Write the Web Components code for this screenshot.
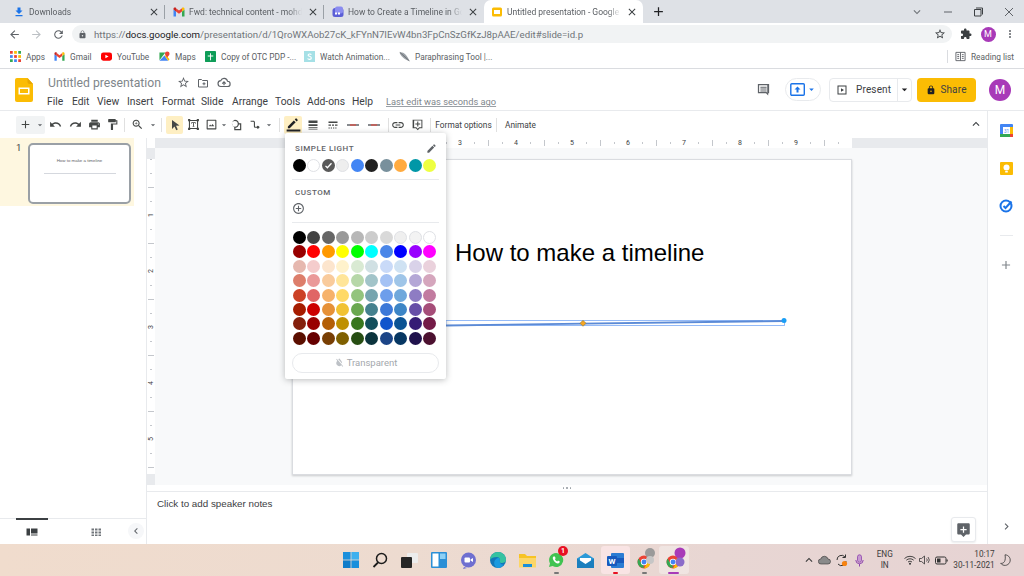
<!DOCTYPE html>
<html lang="en"><head><meta charset="utf-8"><title>Untitled presentation</title>
<style>
html,body{margin:0;padding:0;background:#fff}
body{width:1024px;height:576px;overflow:hidden;font-family:Roboto,"Liberation Sans",sans-serif}
</style></head>
<body>
<app-shell></app-shell>
<script>
const P={
star:'M22 9.24l-7.19-.62L12 2 9.19 8.63 2 9.24l5.46 4.73L5.82 21 12 17.27 18.18 21l-1.63-7.03L22 9.24zM12 15.4l-3.76 2.27 1-4.28-3.32-2.88 4.38-.38L12 6.1l1.71 4.04 4.38.38-3.32 2.88 1 4.28L12 15.4z',
back:'M20 11H7.83l5.59-5.59L12 4l-8 8 8 8 1.41-1.41L7.83 13H20v-2z',
forward:'M12 4l-1.41 1.41L16.17 11H4v2h12.17l-5.58 5.59L12 20l8-8z',
reload:'M17.65 6.35C16.2 4.9 14.21 4 12 4c-4.42 0-7.99 3.58-7.99 8s3.57 8 7.99 8c3.73 0 6.84-2.55 7.73-6h-2.08c-.82 2.33-3.04 4-5.65 4-3.31 0-6-2.69-6-6s2.69-6 6-6c1.66 0 3.14.69 4.22 1.78L13 11h7V4l-2.35 2.35z',
lock:'M18 8h-1V6c0-2.76-2.24-5-5-5S7 3.24 7 6v2H6c-1.1 0-2 .9-2 2v10c0 1.1.9 2 2 2h12c1.1 0 2-.9 2-2V10c0-1.1-.9-2-2-2zm-6 9c-1.1 0-2-.9-2-2s.9-2 2-2 2 .9 2 2-.9 2-2 2zm3.1-9H8.9V6c0-1.71 1.39-3.1 3.1-3.1 1.71 0 3.1 1.39 3.1 3.1v2z',
puzzle:'M20.5 11H19V7c0-1.1-.9-2-2-2h-4V3.5C13 2.12 11.88 1 10.5 1S8 2.12 8 3.5V5H4c-1.1 0-1.99.9-1.99 2v3.8H3.5c1.49 0 2.7 1.21 2.7 2.7s-1.21 2.7-2.7 2.7H2V20c0 1.1.9 2 2 2h3.8v-1.5c0-1.49 1.21-2.7 2.7-2.7 1.49 0 2.7 1.21 2.7 2.7V22H17c1.1 0 2-.9 2-2v-4h1.5c1.38 0 2.5-1.12 2.5-2.5S21.88 11 20.5 11z',
undo:'M12.5 8c-2.65 0-5.05.99-6.9 2.6L2 7v9h9l-3.62-3.62c1.39-1.16 3.16-1.88 5.12-1.88 3.54 0 6.55 2.31 7.6 5.5l2.37-.78C21.08 11.03 17.15 8 12.5 8z',
redo:'M18.4 10.6C16.55 8.99 14.15 8 11.5 8c-4.65 0-8.58 3.03-9.96 7.22L3.9 16c1.05-3.19 4.05-5.5 7.6-5.5 1.95 0 3.73.72 5.12 1.88L13 16h9V7l-3.6 3.6z',
print:'M19 8H5c-1.66 0-3 1.34-3 3v6h4v4h12v-4h4v-6c0-1.66-1.34-3-3-3zm-3 11H8v-5h8v5zm3-7c-.55 0-1-.45-1-1s.45-1 1-1 1 .45 1 1-.45 1-1 1zm-1-9H6v4h12V3z',
paint:'M18 4V3c0-.55-.45-1-1-1H5c-.55 0-1 .45-1 1v4c0 .55.45 1 1 1h12c.55 0 1-.45 1-1V6h1v4H9v11c0 .55.45 1 1 1h2c.55 0 1-.45 1-1v-9h8V4h-3z',
zoom:'M15.5 14h-.79l-.28-.27C15.41 12.59 16 11.11 16 9.5 16 5.91 13.09 3 9.5 3S3 5.91 3 9.5 5.91 16 9.5 16c1.61 0 3.09-.59 4.23-1.57l.27.28v.79l5 4.99L20.49 19l-4.99-5zm-6 0C7.01 14 5 11.99 5 9.5S7.01 5 9.5 5 14 7.01 14 9.5 11.99 14 9.5 14zm.5-7H9v2H7v1h2v2h1v-2h2V9h-2z',
pencil:'M3 17.25V21h3.75L17.81 9.94l-3.75-3.75L3 17.25zM20.71 7.04c.39-.39.39-1.02 0-1.41l-2.34-2.34c-.39-.39-1.02-.39-1.41 0l-1.83 1.83 3.75 3.75 1.83-1.83z',
penbar:'M3 15v3h3L15.5 8.5l-3-3L3 15zM18.6 5.4c.3-.3.3-.8 0-1.1l-1.9-1.9c-.3-.3-.8-.3-1.1 0l-1.6 1.6 3 3 1.6-1.6zM1 20h22v3H1z',
link:'M3.9 12c0-1.71 1.39-3.1 3.1-3.1h4V7H7c-2.76 0-5 2.24-5 5s2.24 5 5 5h4v-1.9H7c-1.71 0-3.1-1.39-3.1-3.1zM8 13h8v-2H8v2zm9-6h-4v1.9h4c1.71 0 3.1 1.39 3.1 3.1s-1.39 3.1-3.1 3.1h-4V17h4c2.76 0 5-2.24 5-5s-2.24-5-5-5z',
up:'M12 8l-6 6 1.41 1.41L12 10.83l4.59 4.58L18 14z',
left:'M15.41 7.41L14 6l-6 6 6 6 1.41-1.41L10.83 12z',
right:'M10 6L8.59 7.41 13.17 12l-4.58 4.59L10 18l6-6z',
add:'M19 13h-6v6h-2v-6H5v-2h6V5h2v6h6v2z',
close:'M19 6.41L17.59 5 12 10.59 6.41 5 5 6.41 10.59 12 5 17.59 6.41 19 12 13.41 17.59 19 19 17.59 13.41 12z',
caret:'M7 10l5 5 5-5z',
cursor:'M6 2l0 18 5-5 3.5 7.5 3-1.4L14 13.6l7-.6z',
comment:'M3 3h18v15h-1.5v3.5L16 18H3zM5 5v11h12l1 1V5zM7 7.5h10v1.6H7zM7 10.5h10v1.6H7zM7 13.5h10v1.6H7z',
commentadd:'M4 3h17v16h-4l-1 0-3.5 3.5L9 19H3V3zm1.8 1.8v12.4h4l2.7 2.6 2.7-2.6h4V4.8zM11.5 6.5h2V10h3.5v2h-3.5v3.5h-2V12H8v-2h3.5z',
addcomment:'M4 2h16c1.1 0 2 .9 2 2v14c0 1.1-.9 2-2 2h-4l-4 4-4-4H4c-1.1 0-2-.9-2-2V4c0-1.1.9-2 2-2zm7 5v4H7v2h4v4h2v-4h4v-2h-4V7z',
filmview:'M1 5h7v14H1zM10 5h13v10H10zM10 17h13v2H10z',
grid:'M3 5h5v4H3zM10 5h5v4h-5zM17 5h5v4h-5zM3 11h5v4H3zM10 11h5v4h-5zM17 11h5v4h-5zM3 17h5v3H3zM10 17h5v3h-5zM17 17h5v3h-5z',
present:'M3 3h18v18H3zM5 5v14h14V5zM10 8.5l6 3.5-6 3.5z',
dots:'M12 8a2 2 0 1 0 0-4 2 2 0 0 0 0 4zm0 2a2 2 0 1 0 0 4 2 2 0 0 0 0-4zm0 6a2 2 0 1 0 0 4 2 2 0 0 0 0-4z',
weight:'M3 3h18v5H3zM3 10.5h18v3.5H3zM3 16.5h18v2H3zM3 20.5h18v1H3z',
dash:'M3 5h18v3H3zM3 11h5v2.5H3zM10 11h4v2.5h-4zM16 11h5v2.5h-5zM3 17h2.5v2H3zM7.5 17H10v2H7.5zM12 17h2.5v2H12zM16.5 17H19v2h-2.5z',
image:'M4 3h16c.6 0 1 .4 1 1v16c0 .6-.4 1-1 1H4c-.6 0-1-.4-1-1V4c0-.6.4-1 1-1zm1 2v14h14V5zM7 15l2.5-3 2 2.4 2.5-3.4 3 4z',
shape:'M10 3a7 7 0 0 1 6.93 6H21v12H9v-5.07A7 7 0 0 1 10 3zm0 2a5 5 0 1 0 0 10 5 5 0 0 0 0-10zm6.9 6a7 7 0 0 1-5.9 5.9V19h8v-8z',
connector:'M3 5h5c1.7 0 3 1.3 3 3v7c0 .6.4 1 1 1h2.3a2.5 2.5 0 1 1 0 2H12c-1.7 0-3-1.3-3-3V8c0-.6-.4-1-1-1H3z',
textbox:'M2 2h4v1.5h12V2h4v4h-1.5v12H22v4h-4v-1.5H6V22H2v-4h1.5V6H2zm3.5 4v12H6v.5h12V18h.5V6H18v-.5H6V6zM8 8h8v2.5h-1.2V9.3h-2V15h1v1h-3.6v-1h1V9.3h-2v1.2H8z',
plusc:'M13 7h-2v4H7v2h4v4h2v-4h4v-2h-4V7zm-1-5C6.48 2 2 6.48 2 12s4.48 10 10 10 10-4.48 10-10S17.52 2 12 2zm0 18c-4.41 0-8-3.59-8-8s3.59-8 8-8 8 3.59 8 8-3.59 8-8 8z',
transparent:'M6 4l14 16-1.2 1L16 18a7 7 0 0 1-10-1c-2-3-1-6 1-9L4.800 5zM12 3c2 2.500 5 6 5.500 9 .1.700.1 1.400 0 2L9.300 5c1-1 1.900-1.500 2.700-2z'
};
const chromeIcon=`<svg viewBox="0 0 24 24" width="100%" height="100%"><circle cx="12" cy="12" r="11" fill="#ea4335"/><path fill="#34a853" d="M2.500 6.500 8 16l4 1-4.500 5A11 11 0 0 1 2.500 6.500z"/><path fill="#34a853" d="M2.500 6.500 8 15l5 7a11 11 0 0 1-10.500-15.500z"/><path fill="#fbbc04" d="M21.500 6.500A11 11 0 0 1 12 23l4.500-8 1-8.500z"/><circle cx="12" cy="12" r="5.500" fill="#fff"/><circle cx="12" cy="12" r="4.200" fill="#4285f4"/></svg>`;
const gmailIcon=`<svg viewBox="0 0 24 24" width="100%" height="100%"><path fill="#4285f4" d="M1 21h5V11L1 7z"/><path fill="#34a853" d="M18 21h5V7l-5 4z"/><path fill="#ea4335" d="M6 11l6 4.500 6-4.500V4.500l-6 4.500L6 4.500z"/><path fill="#c5221f" d="M1 7V5.500C1 3 4 2 6 3.500V11z"/><path fill="#fbbc04" d="M18 11V3.500C20 2 23 3 23 5.500V7z"/></svg>`;

function def(tag,css,render){
  customElements.define(tag,class extends HTMLElement{
    connectedCallback(){
      if(this.shadowRoot)return;
      const s=this.attachShadow({mode:'open'});
      const body=typeof render==='function'?render(this):render;
      s.innerHTML=`<style>${css}</style>${body}`;
    }
  });
}
def('g-icon',':host{display:inline-flex;align-items:center;justify-content:center;flex:none}svg{display:block;width:100%;height:100%}',el=>{
  const n=el.getAttribute('n'),c=el.getAttribute('c')||'#5f6368',z=el.getAttribute('z')||14;
  el.style.width=z+'px';el.style.height=z+'px';
  return `<svg viewBox="0 0 24 24"><path fill="${c}" fill-rule="evenodd" d="${P[n]}"/></svg>`;
});

/* browser tabs */
def('chrome-tab',`
:host{display:flex;align-items:center;height:23px;box-sizing:border-box;position:relative;color:#5a5e63;font:8.500px Roboto,"Liberation Sans",sans-serif;flex:none}
:host([active]){background:#fff;border-radius:7px 7px 0 0;color:#5a5e63}
.ic{width:12px;height:12px;flex:none;display:flex;margin-right:4px}
.t{flex:1;white-space:nowrap;overflow:hidden;-webkit-mask-image:linear-gradient(90deg,#000 88%,transparent);mask-image:linear-gradient(90deg,#000 88%,transparent)}
.x{width:22px;display:flex;justify-content:center;flex:none}
`,el=>`<span class="ic"><slot name="icon"></slot></span><span class="t"><slot></slot></span><span class="x"><g-icon n="close" c="#3c4043" z="12"></g-icon></span>`);
def('tab-sep',':host{display:block;width:1px;height:14px;background:#9aa0a6;flex:none;margin-left:-1px}','');
def('chrome-tabs',`
:host{display:flex;align-items:center;height:23px;background:#dee1e6;flex:none}
.win{display:flex;margin-left:auto;align-items:center}
.win g-icon{width:12px}
.w{width:30.500px;display:flex;justify-content:center}
.plus{margin-left:3px;width:24px;display:flex;justify-content:center}
`,`
<chrome-tab style="width:165px;padding-left:13px"><svg slot="icon" viewBox="0 0 24 24" width="12" height="12"><path fill="#1a73e8" d="M19 9h-4V3H9v6H5l7 7zM5 18v2.500h14V18z"/></svg>Downloads</chrome-tab><tab-sep></tab-sep>
<chrome-tab style="width:159px;padding-left:8px"><svg slot="icon" viewBox="0 0 24 24" width="12" height="12">${gmailIcon.replace(/^<svg[^>]*>|<\/svg>$/g,'')}</svg>Fwd: technical content - mohd.ashraf@</chrome-tab><tab-sep></tab-sep>
<chrome-tab style="width:160px;padding-left:8px"><svg slot="icon" viewBox="0 0 24 24" width="12" height="12"><rect x="1" y="4" width="22" height="18" rx="5" fill="#5b5fd6"/><rect x="6" y="1" width="16" height="14" rx="4" fill="#8a8cf0"/><rect x="6" y="13" width="4" height="4" fill="#fff"/><rect x="12" y="13" width="4" height="4" fill="#fff"/></svg>How to Create a Timeline in Google Slides</chrome-tab>
<chrome-tab active style="width:159px;padding-left:7px"><svg slot="icon" viewBox="0 0 24 24" width="12" height="12"><rect x="2" y="3" width="20" height="18" rx="3" fill="#fbbc04"/><rect x="6" y="8" width="12" height="8" fill="#fff"/></svg>Untitled presentation - Google Slides</chrome-tab>
<span class="plus"><g-icon n="add" c="#202124" z="15"></g-icon></span>
<span class="win">
<span class="w"><g-icon n="up" c="#70757a" z="14" style="transform:rotate(180deg)"></g-icon></span>
<span class="w"><svg width="10" height="10" viewBox="0 0 10 10"><path d="M1 5h8" stroke="#5f6368"/></svg></span>
<span class="w"><svg width="10" height="10" viewBox="0 0 10 10"><path d="M1.500 2.500h6.500v6.500h-6.500zM3 1h6.500v6.500" fill="none" stroke="#3c4043"/></svg></span>
<span class="w"><svg width="10" height="10" viewBox="0 0 10 10"><path d="M1 1l8 8M9 1l-8 8" stroke="#5f6368"/></svg></span>
</span>`);

/* omnibox row */
def('chrome-omnibox',`
:host{display:flex;align-items:center;height:22px;background:#fff;flex:none;position:relative}
.nav{display:flex;width:72px;padding-left:3px;box-sizing:border-box}
.nav span{width:22px;display:flex;justify-content:center}
.bar{width:880px;height:18px;border-radius:9px;background:#f1f3f4;display:flex;align-items:center;box-sizing:border-box;padding:0 6px 0 6px;font:9.700px Roboto,"Liberation Sans",sans-serif;color:#70757a}
.u{margin-left:7px;flex:1;white-space:nowrap}
.u b{font-weight:400;color:#202124}
.r{display:flex;align-items:center;flex:1;}
.r span{display:flex;justify-content:center}
.av{width:15px;height:15px;border-radius:50%;background:#a83ab8;color:#fff;font:9px Roboto,sans-serif;display:flex;align-items:center;justify-content:center}
`,`
<span class="nav"><span><g-icon n="back" c="#5f6368" z="13"></g-icon></span><span><g-icon n="forward" c="#bcc0c4" z="13"></g-icon></span><span><g-icon n="reload" c="#5f6368" z="13"></g-icon></span></span>
<span class="bar"><g-icon n="lock" c="#5f6368" z="9"></g-icon><span class="u">https://<b>docs.google.com</b>/presentation/d/1QroWXAob27cK_kFYnN7IEvW4bn3FpCnSzGfKzJ8pAAE/edit#slide=id.p</span><g-icon n="star" c="#3c4043" z="12"></g-icon></span>
<span class="r"><span style="width:28px"><g-icon n="puzzle" c="#3c4043" z="12"></g-icon></span><span style="width:16px"><span class="av">M</span></span><span style="width:28px"><g-icon n="dots" c="#5f6368" z="12"></g-icon></span></span>`);

/* bookmarks */
def('book-mark',`
:host{display:flex;align-items:center;flex:none;color:#5a5e63;font:8.300px Roboto,"Liberation Sans",sans-serif;white-space:nowrap}
.i{width:11px;height:11px;margin-right:5px;display:flex;flex:none}
`,`<span class="i"><slot name="i"></slot></span><slot></slot>`);
def('chrome-bookmarks',`
:host{display:flex;align-items:center;height:24px;box-sizing:border-box;border-bottom:1px solid #dadce0;background:#fff;padding-left:10px;flex:none}
.rl{margin-left:auto;display:flex;align-items:center;padding-right:10px;color:#5a5e63;font:8.300px Roboto,"Liberation Sans",sans-serif}
.d{width:1px;height:13px;background:#dadce0;margin-right:7px}
svg{display:block}
`,`
<book-mark style="width:44px"><svg slot="i" viewBox="0 0 12 12" width="11" height="11"><g id="a"><rect width="3" height="3" fill="#ea4335"/><rect x="4.500" width="3" height="3" fill="#fbbc04"/><rect x="9" width="3" height="3" fill="#34a853"/><rect y="4.500" width="3" height="3" fill="#4285f4"/><rect x="4.500" y="4.500" width="3" height="3" fill="#ea4335"/><rect x="9" y="4.500" width="3" height="3" fill="#fbbc04"/><rect y="9" width="3" height="3" fill="#34a853"/><rect x="4.500" y="9" width="3" height="3" fill="#4285f4"/><rect x="9" y="9" width="3" height="3" fill="#ea4335"/></g></svg>Apps</book-mark>
<book-mark style="width:47px"><svg slot="i" viewBox="0 0 24 24" width="11" height="11">${gmailIcon.replace(/^<svg[^>]*>|<\/svg>$/g,'')}</svg>Gmail</book-mark>
<book-mark style="width:58px"><svg slot="i" viewBox="0 0 24 24" width="11" height="11"><rect y="3" width="24" height="18" rx="5" fill="#f00"/><path d="M9.500 8v8l7-4z" fill="#fff"/></svg>YouTube</book-mark>
<book-mark style="width:46px"><svg slot="i" viewBox="0 0 24 24" width="11" height="11"><path fill="#34a853" d="M1 3h13L1 20z"/><path fill="#4285f4" d="M1 21l11-11 8 11z"/><path fill="#fbbc04" d="M12 10l8 11 3-3-7-8z"/><path fill="#ea4335" d="M18 1a5 5 0 0 1 5 5c0 3-5 8-5 8s-5-5-5-8a5 5 0 0 1 5-5z"/></svg>Maps</book-mark>
<book-mark style="width:99px"><svg slot="i" viewBox="0 0 24 24" width="11" height="11"><rect width="24" height="24" rx="1" fill="#0f9d58"/><path d="M11 5h2v5h5v2h-5v8h-2v-8H6v-2h5z" fill="#fff"/></svg>Copy of OTC PDP -...</book-mark>
<book-mark style="width:95px"><svg slot="i" viewBox="0 0 24 24" width="11" height="11"><rect width="24" height="24" fill="#a5e0e6"/><path d="M16 8c-1-2-7-2-7 1s7 2 7 6-7 4-8 1" fill="none" stroke="#fff" stroke-width="2.500"/></svg>Watch Animation...</book-mark>
<book-mark><svg slot="i" viewBox="0 0 24 24" width="11" height="11"><path d="M1 3c8-2 16 5 22 19C15 19 5 14 1 3z" fill="#9aa0a6"/><path d="M2 3l21 19" stroke="#3c4043"/></svg>Paraphrasing Tool |...</book-mark>
<span class="rl"><span class="d"></span><svg width="11" height="11" viewBox="0 0 12 12" style="margin-right:5px"><path d="M1 1.500h10v9H1zM6 1.500v9M2.500 4h2M2.500 6h2M2.500 8h2M7.500 4h2M7.500 6h2M7.500 8h2" fill="none" stroke="#5f6368"/></svg>Reading list</span>`);

/* docs header */
def('docs-header',`
:host{display:flex;height:42px;box-sizing:border-box;border-bottom:1px solid #e8eaed;background:#fff;flex:none;position:relative}
.logo{width:48px;padding:9px 0 0 15px;box-sizing:border-box;flex:none}
.mid{display:flex;flex-direction:column;flex:none;width:700px;padding-top:6px;box-sizing:border-box}
.title{display:flex;align-items:center;height:16px;color:#80868b;font:12.200px Roboto,"Liberation Sans",sans-serif}
.title .n{width:129px;white-space:nowrap}
.title g-icon{margin-right:7px}
.menu{display:flex;margin-top:3px;height:18px;align-items:center;margin-left:-1px;color:#3c4043;font:10.300px Roboto,"Liberation Sans",sans-serif;white-space:nowrap}
.menu span{flex:none}
.menu u{color:#80868b;text-decoration-color:#9aa0a6;font-size:9.300px}
.right{display:flex;align-items:center;margin-left:auto;padding-right:13px}
.cm{margin-right:1px}
.pill{width:36px;height:23px;box-sizing:border-box;border:1px solid #e8eaed;border-radius:12px;display:flex;align-items:center;justify-content:center;margin-left:13px;margin-right:8px}
.pre{display:flex;height:24px;width:83px;box-sizing:border-box;border:1px solid #e8eaed;border-radius:4px;margin-right:5px;color:#3c4043;font:400 10px Roboto,sans-serif;letter-spacing:.15px;align-items:center}
.pre .a{display:flex;align-items:center;width:69px;border-right:1px solid #e8eaed;height:100%;box-sizing:border-box;padding-left:6px}
.share{display:flex;align-items:center;justify-content:center;width:59px;height:24px;background:#fbbc04;border-radius:4px;font:400 10px Roboto,sans-serif;letter-spacing:.15px;color:#3c4043}
.av{width:22px;height:22px;border-radius:50%;background:#a83ab8;color:#fff;margin-left:13px;display:flex;align-items:center;justify-content:center;font:12px Roboto,sans-serif}
`,`
<div class="logo"><svg width="18" height="24" viewBox="0 0 18 24"><path fill="#fbbc04" d="M2 0h10.500L18 6v16a2 2 0 0 1-2 2H2a2 2 0 0 1-2-2V2a2 2 0 0 1 2-2z"/><path fill="#e8a600" d="M12.500 0v4a2 2 0 0 0 2 2H18z"/><path fill="#fff" fill-rule="evenodd" d="M3.500 9.500h11v7h-11zM5 11v4h8v-4z"/></svg></div>
<div class="mid">
<div class="title"><span class="n">Untitled presentation</span><g-icon n="star" z="13"></g-icon><svg width="12" height="12" viewBox="0 0 24 24" style="margin:0 8px 0 0"><path d="M3 5h6l2 2h10v13H3z M11 13.500h6M14 10.500v6" fill="none" stroke="#5f6368" stroke-width="2"/></svg><svg width="14" height="14" viewBox="0 0 24 24"><path d="M7 18a5 5 0 0 1-.5-10A6 6 0 0 1 18 9a4.500 4.500 0 0 1 0 9zM9 13l3-3 3 3M12 10v6" fill="none" stroke="#5f6368" stroke-width="2"/></svg></div>
<div class="menu"><span style="width:25px">File</span><span style="width:25px">Edit</span><span style="width:30px">View</span><span style="width:35px">Insert</span><span style="width:39px">Format</span><span style="width:31px">Slide</span><span style="width:43px">Arrange</span><span style="width:32px">Tools</span><span style="width:45px">Add-ons</span><span style="width:34px">Help</span><span><u>Last edit was seconds ago</u></span></div>
</div>
<div class="right">
<g-icon n="comment" z="15" class="cm"></g-icon>
<span class="pill"><svg width="16" height="13" viewBox="0 0 16 13"><rect x=".8" y=".8" width="13.500" height="11.500" rx="1" fill="none" stroke="#1a73e8" stroke-width="1.400"/><path d="M7.500 3.500l3 3H8.500v3h-2v-3h-2z" fill="#1a73e8"/></svg><g-icon n="caret" c="#1a73e8" z="11"></g-icon></span>
<span class="pre"><span class="a"><g-icon n="present" c="#3c4043" z="12"></g-icon><span style="margin-left:8px">Present</span></span><g-icon n="caret" c="#202124" z="13"></g-icon></span>
<span class="share"><g-icon n="lock" c="#202124" z="10"></g-icon><span style="margin-left:4px">Share</span></span>
<span class="av">M</span>
</div>`);

/* toolbar */
def('tb-item',`
:host{display:flex;align-items:center;justify-content:center;height:18px;flex:none}
:host([on]){background:#feefc3;border-radius:2px}
:host([sep]){width:1px!important;height:14px;background:#e0e0e0;}
`,'<slot></slot>');
def('docs-toolbar',`
:host{display:flex;align-items:center;height:27px;box-sizing:border-box;background:#fff;padding-left:16px;flex:none;color:#3c4043;font:400 8.300px Roboto,sans-serif}
.g{display:flex;background:#f1f3f4;border-radius:2px;height:18px;margin-right:0}
.end{margin-left:auto;padding-right:41px}
`,()=>{
 const I=(n,w,z=13,extra='')=>`<tb-item style="width:${w}px" ${extra}><g-icon n="${n}" z="${z}" c="#444746"></g-icon></tb-item>`;
 const C=(w)=>`<tb-item style="width:${w}px"><g-icon n="caret" z="10" c="#5f6368"></g-icon></tb-item>`;
 const S=(l,r)=>`<tb-item sep style="margin:0 ${r}px 0 ${l}px"></tb-item>`;
 const L=(w,c)=>`<tb-item style="width:${w}px"><svg width="12" height="4" viewBox="0 0 12 4"><path d="M0 2h12" stroke="#5f6368" stroke-width="1.500"/><path d="M3 2h6" stroke="#ea4335" stroke-width="1.500" opacity=".7"/></svg></tb-item>`;
 return `<span class="g">${I('add',19,13)}${C(10)}</span>
 ${I('undo',20)}${I('redo',20)}${I('print',19)}${I('paint',17)}${S(3,0)}
 ${I('zoom',25)}${C(6)}${S(5,4)}
 ${I('cursor',17,12,'on')}${I('textbox',20)}${I('image',17)}${C(7)}${I('shape',18,14)}${I('connector',20)}${C(8)}${S(6,4)}
 <tb-item on style="width:18px"><g-icon n="penbar" z="15" c="#202124"></g-icon></tb-item>${I('weight',21,12)}${I('dash',20,12)}${L(20)}${L(21)}${S(4,2)}
 ${I('link',14,14)}${`<tb-item style="width:24px"><g-icon n="commentadd" z="13" c="#444746"></g-icon></tb-item>`}${S(1,5)}
 <tb-item style="width:55px;white-space:nowrap;">Format options</tb-item>${S(5,8)}<tb-item style="white-space:nowrap">Animate</tb-item>
 <span class="end"><g-icon n="up" z="14" c="#3c4043" style="transform:none"></g-icon></span>`;
});

/* filmstrip */
def('film-strip',`
:host{display:flex;flex-direction:column;width:147px;box-sizing:border-box;border-right:1px solid #e8eaed;background:#fff;flex:none;position:relative}
.row{display:flex;width:134px;height:68px;background:#fef7e0;box-sizing:border-box;padding:5px 0 0 28px;margin-top:0;position:relative}
.n{position:absolute;left:16px;top:4px;font:9.500px Roboto,sans-serif;color:#3c4043}
.th{width:103px;height:61px;background:#fff;border:2px solid #9aa0a6;border-radius:5px;box-sizing:border-box;display:flex;flex-direction:column;align-items:center;font:4.400px "Liberation Sans",sans-serif;color:#5f6368;padding-top:13px}
.th i{display:block;width:72px;height:1px;background:#d5d8de;margin-top:10px}
.sp{flex:1}
.bot{height:26px;border-top:1px solid #e8eaed;display:flex;align-items:center;position:relative;box-sizing:border-box}
.bar{position:absolute;top:-1px;left:16px;width:32px;height:2px;background:#3c4043}
.c{width:16px;height:16px;border-radius:50%;background:#f6f7f9;display:flex;align-items:center;justify-content:center;position:absolute;left:128px;top:4px}
.a{width:64px;display:flex;justify-content:center}
`,`<div class="row"><span class="n">1</span><div class="th"><span>How to make a timeline</span><i></i></div></div><div class="sp"></div>
<div class="bot"><span class="bar"></span><span class="a"><g-icon n="filmview" z="12" c="#3c4043"></g-icon></span><span class="a"><g-icon n="grid" z="12" c="#70757a"></g-icon></span><span class="c"><g-icon n="left" z="12" c="#5f6368"></g-icon></span></div>`);

/* rulers */
def('h-ruler',`
:host{display:flex;height:10px;background:#e8eaed;flex:none;box-sizing:border-box}
.corner{width:8px;background:#fff;flex:none}
.gap{width:137px;flex:none}
.w{width:560px;flex:none;background-color:#fff;display:flex;font:7px Roboto,sans-serif;color:#3c4043;
background-image:repeating-linear-gradient(90deg,#c4c7cc 0 1px,transparent 1px 14px),repeating-linear-gradient(90deg,transparent 0 28px,#c4c7cc 28px 29px,transparent 29px 56px);
background-size:100% 2px,100% 6px;background-position:0 50%;background-repeat:no-repeat}
.w span{width:56px;text-align:center;background:transparent;line-height:10px}
.w span b{font-weight:400;background:#fff;padding:0 1px}
.h{width:28px;flex:none}
`,`<div class="corner"></div><div class="gap"></div><div class="w"><i class="h"></i>${[1,2,3,4,5,6,7,8,9].map(n=>n<3?'<span></span>':`<span><b>${n}</b></span>`).join('')}</div>`);
def('v-ruler',`
:host{display:flex;flex-direction:column;width:8px;background:#e8eaed;flex:none}
.t{height:11px;flex:none}
.w{height:315px;flex:none;background-color:#fff;display:flex;flex-direction:column;font:7px Roboto,sans-serif;color:#3c4043;
background-image:repeating-linear-gradient(180deg,#c4c7cc 0 1px,transparent 1px 14px),repeating-linear-gradient(180deg,transparent 0 28px,#c4c7cc 28px 29px,transparent 29px 56px);
background-size:2px 100%,6px 100%;background-position:50% 0;background-repeat:no-repeat}
.w span{height:56px;display:flex;align-items:center;justify-content:center}
.w span b{font-weight:400;background:#fff;transform:rotate(-90deg);display:block}
.h{height:28px;flex:none}
`,`<div class="t"></div><div class="w"><i class="h"></i>${[1,2,3,4,5].map(n=>`<span><b>${n}</b></span>`).join('')}</div>`);

/* slide */
def('slide-page',`
:host{display:block;width:560px;height:316px;box-sizing:border-box;background:#fff;border:1px solid #dadce0;box-shadow:0 1px 2px rgba(60,64,67,.25);position:relative;padding:79px 0 0 162px;font:24px "Liberation Sans",Arial,sans-serif;color:#000;white-space:nowrap;margin:11px 0 0 137px}
svg{position:absolute;left:0;top:0;overflow:visible}
`,`How to make a timeline
<svg width="558" height="314" viewBox="0 0 558 314">
<rect x="153" y="160.500" width="338.500" height="5" fill="none" stroke="#8ab4f8" stroke-width=".9"/>
<path d="M153 165.500L491 161" stroke="#5b8ad6" stroke-width="1.800"/>
<path d="M287 163.300l3-3 3 3-3 3z" fill="#f5a623" stroke="#7a6a30" stroke-width=".5"/>
<circle cx="491" cy="160.500" r="2.500" fill="#1a9ef5"/>
</svg>`);

def('docs-canvas',`
:host{display:flex;flex-direction:column;flex:1;min-width:0;background:#fff}
.r{display:flex;height:337px;flex:none}
.c{flex:1;background:#f8f9fa;overflow:hidden;min-width:0}
.grip{height:6px;border-bottom:1px solid #e8eaed;display:flex;justify-content:center;align-items:center;gap:2px;flex:none;box-sizing:content-box}
.grip i{width:1.500px;height:1.500px;background:#9aa0a6;border-radius:50%}
.notes{flex:1;padding:6px 10px;font:9.800px "Liberation Sans",Arial,sans-serif;color:#3c4043;position:relative;box-sizing:border-box}
.nb{position:absolute;right:11px;top:25px;width:25px;height:25px;box-sizing:border-box;border:1px solid #e8eaed;border-radius:3px;background:#fff;display:flex;align-items:center;justify-content:center;box-shadow:0 1px 2px rgba(0,0,0,.08)}
`,`<h-ruler></h-ruler><div class="r"><v-ruler></v-ruler><div class="c"><slide-page></slide-page></div></div>
<div class="grip"><i></i><i></i><i></i></div>
<div class="notes">Click to add speaker notes<span class="nb"><g-icon n="addcomment" z="15" c="#5f6368"></g-icon></span></div>`);

def('side-panel',`
:host{display:flex;flex-direction:column;align-items:center;width:37px;box-sizing:border-box;border-left:1px solid #e8eaed;background:#fff;flex:none;padding-top:0;margin-top:-27px;position:relative}
.s{height:38px;display:flex;align-items:center;justify-content:center;flex:none}
hr{width:13px;border:0;border-top:1px solid #e8eaed;margin:10px 0 0}
.p{margin-top:21px}
.e{margin-top:auto;height:36px;display:flex;align-items:center}
svg{display:block}
`,`<div style="height:0;flex:none"></div>
<div class="s" style="margin-top:0"><svg width="13" height="13" viewBox="0 0 13 13"><rect width="13" height="13" rx="1" fill="#4285f4"/><rect x="3" y="3" width="7" height="7" fill="#fff"/><rect x="10" y="3" width="3" height="7" fill="#fbbc04"/><rect y="10" width="10" height="3" fill="#34a853"/><rect x="10" y="10" width="3" height="3" fill="#ea4335"/><text x="6.500" y="8.500" font-size="4.500" text-anchor="middle" fill="#4285f4" font-family="Roboto">31</text></svg></div>
<div class="s"><svg width="13" height="13" viewBox="0 0 13 13"><rect width="13" height="13" rx="1" fill="#fbbc04"/><circle cx="6.500" cy="5.500" r="3" fill="#fff"/><rect x="5.200" y="9" width="2.600" height="1.500" fill="#fff"/></svg></div>
<div class="s"><svg width="14" height="14" viewBox="0 0 14 14"><circle cx="7" cy="7" r="5.500" fill="none" stroke="#1a73e8" stroke-width="2"/><path d="M4.500 7l2 2L12.500 2.500" fill="none" stroke="#1a73e8" stroke-width="2"/></svg></div>
<hr><div class="p"><g-icon n="add" z="14" c="#80868b"></g-icon></div>
<div class="e"><g-icon n="right" z="13" c="#5f6368"></g-icon></div>`);

/* popover */
def('color-dot',`
:host{display:flex;align-items:center;justify-content:center;width:14.500px;height:14.400px}
i{display:flex;align-items:center;justify-content:center;width:13px;height:13px;border-radius:50%;box-sizing:border-box}
`,el=>{const c=el.getAttribute('c');const l=['#ffffff','#efefef','#f3f3f3','#eeeeee'].includes(c);
 return `<i style="background:${c};${l?'border:1px solid #dfe1e5':''}">${el.hasAttribute('check')?'<svg width="9" height="9" viewBox="0 0 24 24"><path d="M4 13l5 5L20 6" fill="none" stroke="#fff" stroke-width="3.500"/></svg>':''}</i>`;});
def('color-popover',`
:host{position:absolute;left:285px;top:133px;width:161px;height:246px;box-sizing:border-box;background:#fff;border-radius:2px;box-shadow:0 1px 6px rgba(60,64,67,.35);padding:8px 7px 6px;z-index:5;font:500 8px Roboto,sans-serif;color:#5f6368}
.h{display:flex;align-items:center;height:14px;padding:0 3px;letter-spacing:.55px;justify-content:space-between}
.h g-icon{margin-right:-1px}
.rowg{display:grid;grid-template-columns:repeat(10,14.500px);margin-top:3px}
hr{border:0;border-top:1px solid #e8eaed;margin:7px 0 0}
.c{height:12px;display:flex;align-items:center;padding:0 3px;letter-spacing:.55px;margin-top:6px}
.pl{height:14px;margin-top:3px;padding-left:0;display:flex;align-items:center}
.main{display:grid;grid-template-columns:repeat(10,14.500px);grid-auto-rows:14.400px;margin-top:7px}
.t{height:20px;margin-top:7px;box-sizing:border-box;border:1px solid #e8eaed;border-radius:10px;display:flex;align-items:center;justify-content:center;color:#a4a8ad;font:400 9.500px Roboto,sans-serif;gap:2px}
`,()=>{
 const theme=['#000000','#ffffff','#595959','#eeeeee','#4285f4','#212121','#78909c','#ffab40','#0097a7','#eeff41'];
 const pal='#000000 #434343 #666666 #999999 #b7b7b7 #cccccc #d9d9d9 #efefef #f3f3f3 #ffffff #980000 #ff0000 #ff9900 #ffff00 #00ff00 #00ffff #4a86e8 #0000ff #9900ff #ff00ff #e6b8af #f4cccc #fce5cd #fff2cc #d9ead3 #d0e0e3 #c9daf8 #cfe2f3 #d9d2e9 #ead1dc #dd7e6b #ea9999 #f9cb9c #ffe599 #b6d7a8 #a2c4c9 #a4c2f4 #9fc5e8 #b4a7d6 #d5a6bd #cc4125 #e06666 #f6b26b #ffd966 #93c47d #76a5af #6d9eeb #6fa8dc #8e7cc3 #c27ba0 #a61c00 #cc0000 #e69138 #f1c232 #6aa84f #45818e #3c78d8 #3d85c6 #674ea7 #a64d79 #85200c #990000 #b45f06 #bf9000 #38761d #134f5c #1155cc #0b5394 #351c75 #741b47 #5b0f00 #660000 #783f04 #7f6000 #274e13 #0c343d #1c4587 #073763 #20124d #4c1130'.split(' ');
 return `<div class="h"><span>SIMPLE LIGHT</span><g-icon n="pencil" z="11" c="#5f6368"></g-icon></div>
 <div class="rowg">${theme.map((c,i)=>`<color-dot c="${c}" ${i==2?'check':''}></color-dot>`).join('')}</div><hr>
 <div class="c">CUSTOM</div><div class="pl"><g-icon n="plusc" z="13" c="#5f6368"></g-icon></div><hr>
 <div class="main">${pal.map(c=>`<color-dot c="${c}"></color-dot>`).join('')}</div>
 <div class="t"><g-icon n="transparent" z="11" c="#bdc1c6"></g-icon><span>Transparent</span></div>`;
});

/* taskbar */
def('win-taskbar',`
:host{display:flex;align-items:center;height:32px;background:linear-gradient(90deg,#f0dccd 0%,#eddbd0 40%,#e8d6d3 70%,#e6d3d3 100%);flex:none;position:relative;font:8.200px Roboto,"Liberation Sans",sans-serif;color:#3c3c3c}
.apps{display:flex;margin-left:336px;align-items:center;flex:none}
.a{width:29.400px;height:28px;display:flex;align-items:center;justify-content:center;position:relative;border-radius:3px;flex:none}
.a.hl{background:rgba(255,255,255,.35)}
.bd{position:absolute;right:3px;top:0;width:10px;height:10px;border-radius:50%;background:#e81123;color:#fff;font:700 7px Roboto,sans-serif;display:flex;align-items:center;justify-content:center}
.u{position:absolute;bottom:0;left:50%;height:2px;width:5px;margin-left:-2.500px;border-radius:1px;background:#777}
.tray{display:flex;align-items:center;margin-left:112px;flex:none}
.tr{display:flex;align-items:center;justify-content:center;flex:none}
.eng{text-align:center;line-height:11px;width:30px}
.clock{text-align:right;line-height:11px;width:45px;white-space:nowrap}
svg{display:block}
`,`
<div class="apps">
<span class="a"><svg width="16" height="16" viewBox="0 0 16 16"><rect width="7.600" height="7.600" fill="#1a8fdc"/><rect x="8.400" width="7.600" height="7.600" fill="#3eb0ee"/><rect y="8.400" width="7.600" height="7.600" fill="#0f7cc9"/><rect x="8.400" y="8.400" width="7.600" height="7.600" fill="#1a8fdc"/></svg></span>
<span class="a"><svg width="16" height="16" viewBox="0 0 16 16"><circle cx="9.500" cy="6.500" r="5" fill="none" stroke="#1c1c1c" stroke-width="1.500"/><path d="M6 10.500L1.500 15" stroke="#1c1c1c" stroke-width="1.800"/></svg></span>
<span class="a"><svg width="17" height="15" viewBox="0 0 17 15"><rect x="6" width="11" height="10" rx="1" fill="#ececec"/><rect y="4" width="11" height="11" rx="1" fill="#262626"/></svg></span>
<span class="a"><svg width="16" height="16" viewBox="0 0 16 16"><rect width="16" height="16" rx="1" fill="#2b8fd6"/><rect x="1.500" y="1.500" width="6" height="13" fill="#fff"/><rect x="9" y="1.500" width="5.500" height="5.500" fill="#8dd0f5"/></svg></span>
<span class="a"><svg width="17" height="17" viewBox="0 0 17 17"><circle cx="8.500" cy="8" r="7.500" fill="#6f6fd0"/><path d="M4 15l-1 2 4-1z" fill="#6f6fd0"/><rect x="4.500" y="5.500" width="5.500" height="5" rx="1" fill="#fff"/><path d="M10.500 7.500l2.500-1.500v4l-2.500-1.500z" fill="#fff"/></svg></span>
<span class="a"><svg width="16" height="16" viewBox="0 0 16 16"><circle cx="8" cy="8" r="8" fill="#1377b8"/><path d="M0 8a8 8 0 0 1 16 0c0 2-2 3-4 3-1.500 0-2.500-.7-2.500-1.500C10 8 10 5 7 5 3.500 5 1 6 0 8z" fill="#36c2a0"/><path d="M9 16c-3 0-4.800-2.400-4.800-5 0-3 2.400-5 4.800-5 .8 0 .9 3 .9 4S11 13 13.500 12.500C12 14.800 10.500 16 9 16z" fill="#1a9ae0"/></svg></span>
<span class="a"><svg width="17" height="15" viewBox="0 0 17 15"><path d="M0 1h6l2 2h9v11H0z" fill="#f7c325"/><path d="M0 5h17v9.500H0z" fill="#fcd667"/><rect x="4" y="11" width="9" height="3" fill="#1a8fdc"/></svg></span>
<span class="a"><svg width="16" height="16" viewBox="0 0 16 16"><path d="M8 1a7 7 0 0 0-6 10.500L1 15l3.600-1A7 7 0 1 0 8 1z" fill="#40c351"/><path d="M5.500 4.500c-1 .8-1 2 0 3.700s2.700 3.200 4.500 3.200c1 0 1.800-.8 1.800-1.800l-1.800-1-.8.800c-1-.3-2-1.400-2.300-2.300l.8-.8-.9-1.800z" fill="#fff"/></svg><span class="bd">1</span><span class="u"></span></span>
<span class="a"><svg width="17" height="15" viewBox="0 0 17 15"><path d="M8.500 0L17 5.500V15H0V5.500z" fill="#2b9ad8"/><path d="M3 5h11v4L8.500 12 3 9z" fill="#fff"/><path d="M0 5.500L8.500 11 17 5.500V15H0z" fill="#1b7fbe"/></svg></span>
<span class="a hl" style="background:#f9e4e4"><svg width="17" height="17" viewBox="0 0 17 17"><rect x="4" y="1" width="13" height="15" rx="1" fill="#2b7cd3"/><rect x="10" y="6" width="7" height="5" fill="#185abd"/><rect x="0" y="4" width="10" height="10" rx="1" fill="#185abd"/><text x="5" y="12" font-family="Roboto" font-size="8" font-weight="700" fill="#fff" text-anchor="middle">W</text></svg><span class="u" style="background:#e81123"></span></span>
<span class="a"><span style="width:14px;height:14px;display:block;margin:3px 0 0 -2px">${chromeIcon}</span><svg width="12" height="16" viewBox="0 0 12 16" style="position:absolute;right:3px;top:2px"><circle cx="6" cy="5" r="5" fill="#9a9a9a"/><circle cx="6" cy="12" r="4" fill="#c6c6c6"/></svg><span class="u"></span></span>
<span class="a hl"><span style="width:14px;height:14px;display:block;margin:3px 0 0 -2px">${chromeIcon}</span><svg width="12" height="20" viewBox="0 0 12 20" style="position:absolute;right:3px;top:1px"><circle cx="6" cy="6" r="5.500" fill="#a83ab8"/><circle cx="6" cy="15" r="4.500" fill="#8b6cc9"/></svg><span class="u" style="width:11px;margin-left:-5.500px;background:#a83ab8"></span></span>
</div>
<div class="tray">
<span class="tr" style="width:16px"><g-icon n="up" z="14" c="#3c3c3c"></g-icon></span>
<span class="tr" style="width:16px"><svg width="13" height="10" viewBox="0 0 13 10"><path d="M3 9a2.500 2.500 0 0 1-.3-5A3.800 3.800 0 0 1 10 4a2.500 2.500 0 0 1 0 5z" fill="#8a8a8a" stroke="#333" stroke-width=".6"/></svg></span>
<span class="tr" style="width:18px"><svg width="13" height="13" viewBox="0 0 13 13"><path d="M2 6a4.500 4.500 0 0 1 8-3M11 7a4.500 4.500 0 0 1-8 3" fill="none" stroke="#333" stroke-width="1"/><path d="M10.500 .5v3h-3" fill="none" stroke="#333"/><circle cx="9.500" cy="9.500" r="2.600" fill="#f7820f"/></svg></span>
<span class="tr" style="width:18px"><svg width="9" height="13" viewBox="0 0 9 13"><rect x="2.500" y=".8" width="4" height="7.500" rx="2" fill="#c69ad0" stroke="#8e44ad" stroke-width=".8"/><path d="M.8 6a3.700 3.700 0 0 0 7.400 0M4.500 10v2.500" fill="none" stroke="#8e44ad"/></svg></span>
<span class="tr eng" style="margin-left:1px">ENG<br>IN</span>
<span class="tr" style="width:15px;margin-left:3px"><svg width="12" height="10" viewBox="0 0 12 10"><path d="M.5 3.500a8 8 0 0 1 11 0M2.300 5.200a5.500 5.500 0 0 1 7.400 0M4 7a3 3 0 0 1 4 0" fill="none" stroke="#333" stroke-width=".9"/><circle cx="6" cy="8.800" r="1" fill="#333"/></svg></span>
<span class="tr" style="width:15px"><svg width="12" height="10" viewBox="0 0 12 10"><path d="M.5 3.500h2L5.500 1v8L2.500 6.500h-2zM7.500 3.500a2 2 0 0 1 0 3M9 2a4.500 4.500 0 0 1 0 6" fill="none" stroke="#333" stroke-width=".8"/></svg></span>
<span class="tr" style="width:17px"><svg width="13" height="9" viewBox="0 0 13 9"><rect x=".5" y="1" width="10.500" height="7" rx="1.500" fill="none" stroke="#333"/><rect x="2" y="2.500" width="3.500" height="4" fill="#333"/><rect x="11.500" y="3.500" width="1.200" height="2" fill="#333"/></svg></span>
<span class="clock">10:17<br>30-11-2021</span>
<span class="tr" style="width:22px"><svg width="11" height="12" viewBox="0 0 11 12"><path d="M5 .8a5.300 5.300 0 1 1-4.300 8.500c3 .6 5.500-2.300 4.300-8.500z" fill="none" stroke="#333" stroke-width=".8"/></svg></span>
</div>`);

def('docs-body',`
:host{display:flex;height:406px;flex:none;background:#fff}
`,`<film-strip></film-strip><docs-canvas></docs-canvas><side-panel></side-panel>`);

def('app-shell',`
:host{display:flex;flex-direction:column;width:1024px;height:576px;position:relative;overflow:hidden;background:#fff}
`,`<chrome-tabs></chrome-tabs><chrome-omnibox></chrome-omnibox><chrome-bookmarks></chrome-bookmarks><docs-header></docs-header><docs-toolbar></docs-toolbar><docs-body></docs-body><win-taskbar></win-taskbar><color-popover></color-popover>`);
</script>
</body></html>
